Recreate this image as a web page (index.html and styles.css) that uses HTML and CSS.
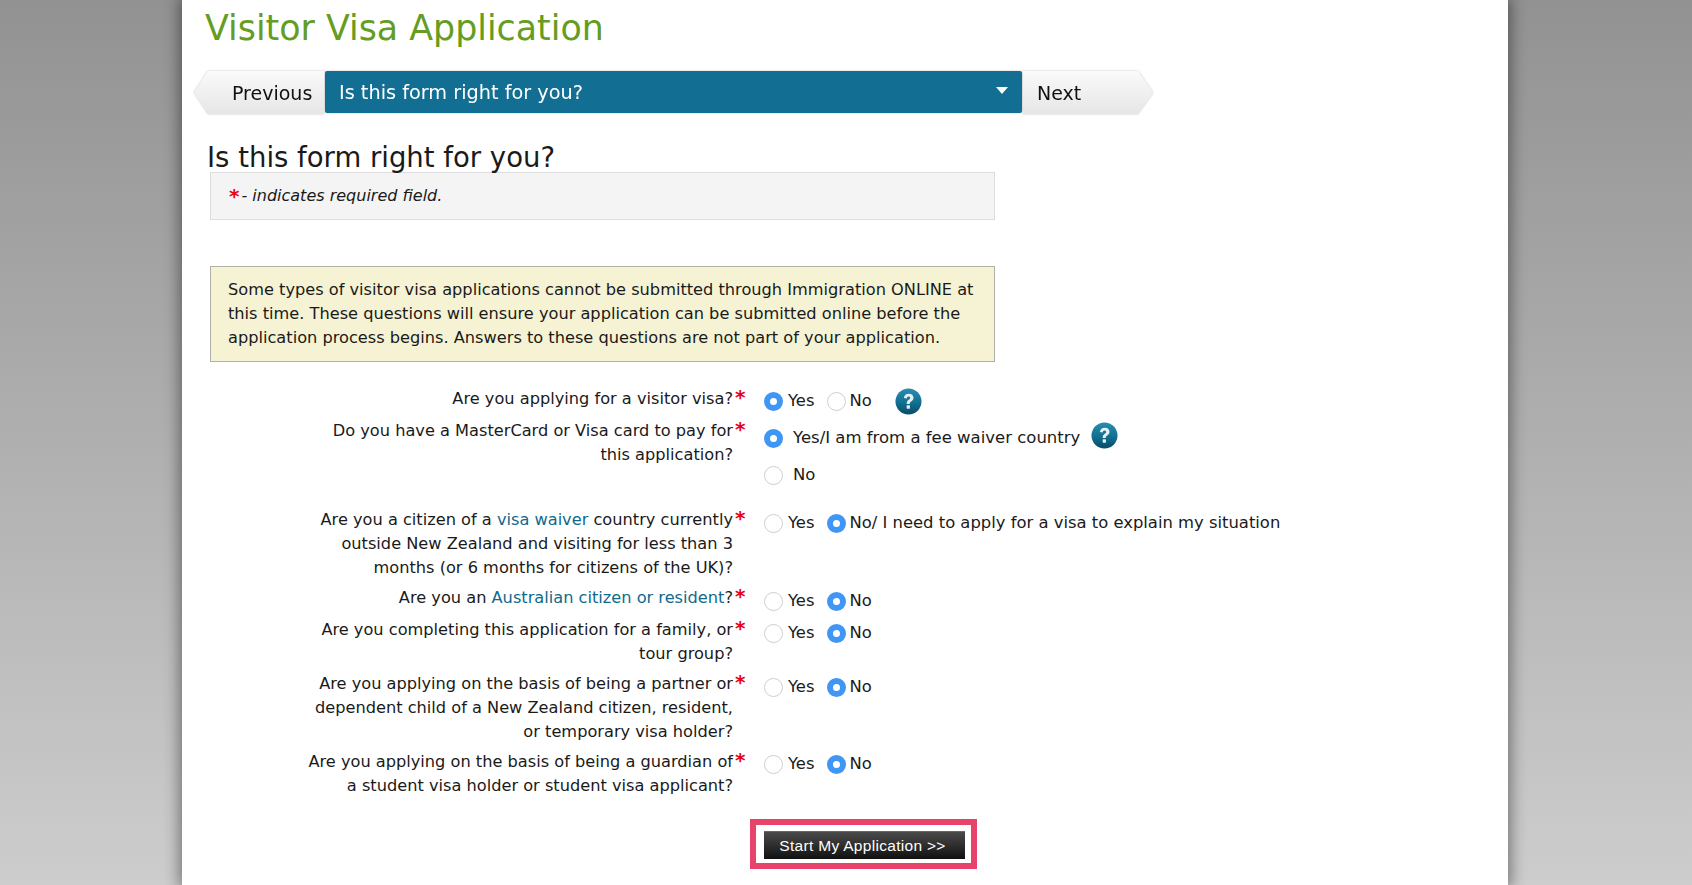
FILE: index.html
```html
<!DOCTYPE html>
<html lang="en">
<head>
<meta charset="utf-8">
<title>Visitor Visa Application</title>
<link rel="stylesheet" href="styles.css">
</head>
<body>
<main class="panel">
  <h1 class="title">Visitor Visa Application</h1>
  <nav class="steps">
    <a class="step step-prev">Previous</a>
    <div class="step-current"><span>Is this form right for you?</span><i class="caret"></i></div>
    <a class="step step-next">Next</a>
  </nav>
  <h2 class="subtitle">Is this form right for you?</h2>
  <div class="legend"><b class="req">*</b><em>- indicates required field.</em></div>
  <div class="notice">Some types of visitor visa applications cannot be submitted through Immigration ONLINE at this time. These questions will ensure your application can be submitted online before the application process begins. Answers to these questions are not part of your application.</div>
  <form class="form">
    <div class="row r1">
      <div class="q"><span>Are you applying for a visitor visa?</span><b class="req">*</b></div>
      <div class="a a1">
        <i class="radio on"></i><span class="opt">Yes</span><i class="radio"></i><span class="opt">No</span>
        <svg class="help help-1" viewBox="0 0 28 28"><use href="#help"/></svg>
      </div>
    </div>
    <div class="row r2">
      <div class="q"><span>Do you have a MasterCard or Visa card to pay for this application?</span><b class="req">*</b></div>
      <div class="a stack">
        <div class="line"><i class="radio on"></i><span class="opt wide">Yes/I am from a fee waiver country</span><svg class="help help-2" viewBox="0 0 28 28"><use href="#help"/></svg></div>
        <div class="line"><i class="radio"></i><span class="opt wide">No</span></div>
      </div>
    </div>
    <div class="row r3">
      <div class="q"><span>Are you a citizen of a <a class="link">visa waiver</a> country currently outside New Zealand and visiting for less than 3 months (or 6 months for citizens of the UK)?</span><b class="req">*</b></div>
      <div class="a"><i class="radio"></i><span class="opt">Yes</span><i class="radio on"></i><span class="opt">No/ I need to apply for a visa to explain my situation</span></div>
    </div>
    <div class="row r4">
      <div class="q"><span>Are you an <a class="link">Australian citizen or resident</a>?</span><b class="req">*</b></div>
      <div class="a"><i class="radio"></i><span class="opt">Yes</span><i class="radio on"></i><span class="opt">No</span></div>
    </div>
    <div class="row r5">
      <div class="q"><span>Are you completing this application for a family, or tour group?</span><b class="req">*</b></div>
      <div class="a"><i class="radio"></i><span class="opt">Yes</span><i class="radio on"></i><span class="opt">No</span></div>
    </div>
    <div class="row r6">
      <div class="q"><span>Are you applying on the basis of being a partner or dependent child of a New Zealand citizen, resident, or temporary visa holder?</span><b class="req">*</b></div>
      <div class="a"><i class="radio"></i><span class="opt">Yes</span><i class="radio on"></i><span class="opt">No</span></div>
    </div>
    <div class="row r7">
      <div class="q"><span>Are you applying on the basis of being a guardian of a student visa holder or student visa applicant?</span><b class="req">*</b></div>
      <div class="a a1"><i class="radio"></i><span class="opt">Yes</span><i class="radio on"></i><span class="opt">No</span></div>
    </div>
    <div class="submit"><div class="highlight"><button type="button" class="btn">Start My Application &gt;&gt;</button></div></div>
  </form>
</main>
<svg class="defs" width="0" height="0" aria-hidden="true">
  <defs>
    <linearGradient id="hg" x1="0" y1="0" x2="0" y2="1"><stop offset="0" stop-color="#2a8db0"/><stop offset="0.55" stop-color="#126f90"/><stop offset="1" stop-color="#0a4a68"/></linearGradient>
    <symbol id="help" viewBox="0 0 28 28">
      <circle cx="14" cy="14" r="13.5" fill="url(#hg)"/>
      <path d="M9.2 10.4c.3-2.9 2.4-4.5 5.1-4.5 2.9 0 4.9 1.7 4.9 4.2 0 1.9-1.1 2.9-2.4 3.8-1.1.8-1.5 1.3-1.5 2.7h-3.2c0-2.2.7-3.3 2.1-4.3 1-.7 1.5-1.2 1.5-2 0-.9-.6-1.5-1.6-1.5-1.1 0-1.8.7-1.9 2z" fill="#e6f1f5"/>
      <rect x="12.1" y="18" width="3.4" height="3.4" rx=".6" fill="#e6f1f5"/>
    </symbol>
  </defs>
</svg>
</body>
</html>
```
FILE: styles.css
```css
html, body { margin: 0; height: 885px; overflow: hidden; }
body {
  background: linear-gradient(#929292, #cdcdcd);
  font-family: "DejaVu Sans", Verdana, sans-serif;
  font-size: 16.2px;
  line-height: 24px;
  color: #1a1a1a;
}
.defs { position: absolute; }
.panel {
  box-sizing: border-box;
  width: 1326px;
  height: 885px;
  margin-left: 182px;
  padding: 0 0 0 23px;
  background: #fff;
  box-shadow: 0 0 14px 3px rgba(0,0,0,.42);
}
.title { margin: 0; padding-top: 6px; font-size: 34.85px; line-height: 44px; font-weight: 400; color: #659c22; }
.steps { display: flex; align-items: flex-start; height: 43px; margin: 21px 0 0 -11px; filter: drop-shadow(0 0 1px rgba(0,0,0,.22)); }
.step {
  box-sizing: border-box;
  height: 43px;
  padding-top: 1px;
  line-height: 43px;
  font-size: 19px;
  color: #111;
  background: linear-gradient(#fafafa, #e6e6e6);
}
.step-prev { width: 130px; padding-left: 38px; margin-right: 1px; clip-path: polygon(14px 0, 100% 0, 100% 100%, 14px 100%, 0 50%); }
.step-next { width: 130px; padding-left: 14px; margin-left: 1px; clip-path: polygon(0 0, 115px 0, 100% 50%, 115px 100%, 0 100%); }
.step-current {
  box-sizing: border-box;
  display: flex;
  align-items: center;
  justify-content: space-between;
  width: 697px;
  height: 42px;
  padding: 1px 14px 0 14px;
  border-radius: 2px;
  background: #126f93;
  color: #fff;
  font-size: 19.3px;
}
.caret { width: 0; height: 0; border: 6px solid transparent; border-top: 7px solid #fff; border-bottom: 0; margin-top: -4px; }
.subtitle { margin: 15px 0 0 2px; height: 43px; font-size: 27.5px; line-height: 56px; font-weight: 400; color: #1a1a1a; }
.legend {
  box-sizing: border-box;
  width: 785px;
  height: 48px;
  margin: 0 0 0 5px;
  padding: 0 18px;
  display: flex;
  align-items: center;
  background: #f4f4f4;
  border: 1px solid #ddd;
  font-size: 16px;
}
.req { color: #e8001c; font-size: 20px; font-weight: 700; line-height: 1; }
.legend .req { margin-right: 2px; }
.notice {
  box-sizing: border-box;
  width: 785px;
  height: 96px;
  margin: 46px 0 0 5px;
  padding: 11px 17px 0;
  background: #f5f3d3;
  border: 1px solid #b0b0a8;
}
.form { margin-top: 25px; }
.row { display: flex; align-items: flex-start; }
.q { display: flex; width: 540px; justify-content: flex-end; }
.q > span { width: 432px; text-align: right; }
.q .req { width: 18px; margin-left: 2px; margin-right: -8px; text-align: left; }
.a { display: flex; align-items: center; margin: 3px 0 0 19px; height: 24px; }
.a.a1 { margin-top: 2px; }
.stack { display: block; height: auto; margin-top: 7px; }
.line { display: flex; align-items: center; height: 24px; }
.line + .line { margin-top: 13px; }
.radio {
  box-sizing: border-box;
  flex: none;
  width: 19px;
  height: 19px;
  border-radius: 50%;
  border: 1.5px solid #cfcfcf;
  background: #fff;
}
.radio.on { border: 6.5px solid #4096f5; background: #fff; }
.opt { margin: 0 13px 0 5px; white-space: nowrap; font-size: 16.4px; }
.radio + .opt + .radio + .opt { margin-left: 3px; }
.opt.wide { margin-left: 10px; margin-right: 11px; font-size: 16.5px; }
.link { color: #0f6a8c; }
.help { width: 27px; height: 27px; flex: none; }
.help-1 { margin: 1px 0 0 10px; }
.help-2 { margin-top: -6px; }
.r1 { height: 32px; }
.r2 { height: 89px; }
.r3 { height: 78px; }
.r4 { height: 32px; }
.r5 { height: 54px; }
.r6 { height: 78px; }
.r7 { height: 69px; }
.submit { margin-left: 545px; }
.highlight { box-sizing: border-box; width: 227px; height: 50px; border: 6px solid #e8436a; padding: 6px 8px; }
.btn {
  display: block;
  width: 201px;
  height: 28px;
  padding: 0 4px 0 0;
  border: 0;
  border-top: 1px solid #666;
  background: linear-gradient(#4a4a4a, #111);
  color: #fff;
  font: 15.5px/26px "Liberation Sans", Arial, sans-serif;
  letter-spacing: .3px;
}
```
